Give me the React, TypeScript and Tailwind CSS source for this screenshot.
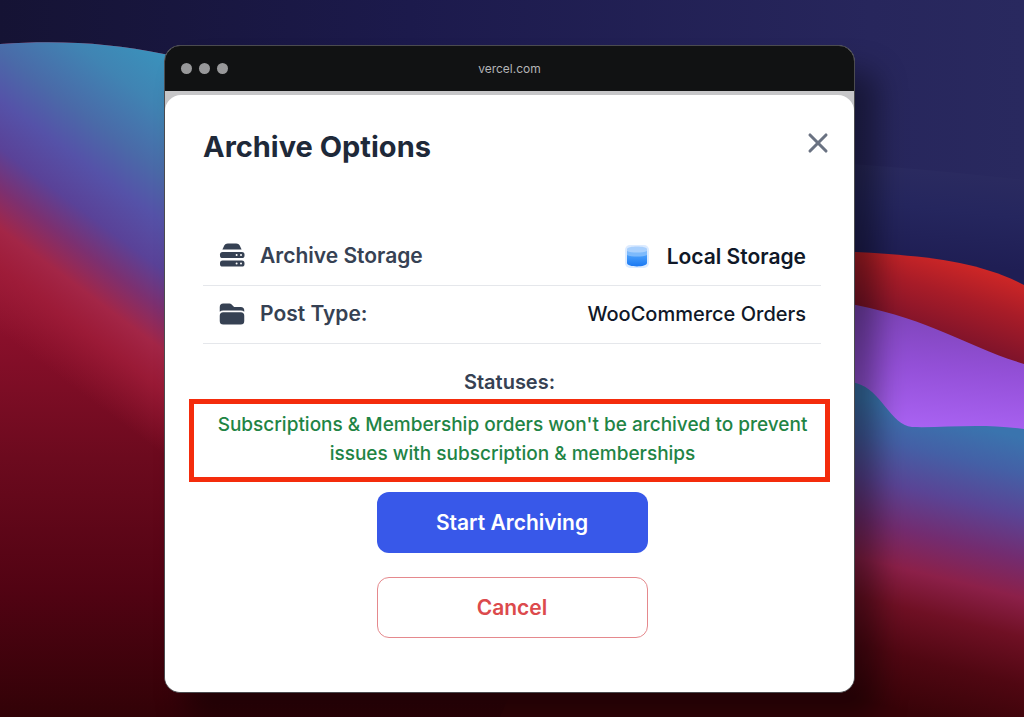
import React from 'react';
import { X } from 'lucide-react';
import { HiFolder } from 'react-icons/hi2';

const Wallpaper: React.FC = () => (
  <svg
    className="absolute inset-0 -z-10 h-full w-full"
    viewBox="0 0 1024 717"
    preserveAspectRatio="none"
    aria-hidden="true"
  >
    <defs>
      <linearGradient id="sky" x1="0" y1="0" x2="1" y2="0">
        <stop offset="0" stopColor="#151334" />
        <stop offset="0.4" stopColor="#1c1a4c" />
        <stop offset="0.85" stopColor="#27265c" />
        <stop offset="1" stopColor="#29295f" />
      </linearGradient>
      <linearGradient id="ridge" gradientUnits="userSpaceOnUse" x1="930" y1="165" x2="920" y2="260">
        <stop offset="0" stopColor="#2b2b60" />
        <stop offset="0.45" stopColor="#25265e" />
        <stop offset="1" stopColor="#1f1e54" />
      </linearGradient>
      <linearGradient id="base" gradientUnits="userSpaceOnUse" x1="0" y1="200" x2="0" y2="717">
        <stop offset="0" stopColor="#a82040" />
        <stop offset="0.27" stopColor="#880f2a" />
        <stop offset="0.5" stopColor="#6c0a1e" />
        <stop offset="0.75" stopColor="#520313" />
        <stop offset="1" stopColor="#320207" />
      </linearGradient>
      <linearGradient id="glow" gradientUnits="userSpaceOnUse" x1="164" y1="54" x2="-28" y2="312">
        <stop offset="0" stopColor="#3a92bc" />
        <stop offset="0.14" stopColor="#4084b3" />
        <stop offset="0.3" stopColor="#4a6aa8" />
        <stop offset="0.42" stopColor="#5552a8" />
        <stop offset="0.54" stopColor="#5a4298" />
        <stop offset="0.64" stopColor="#7c3070" />
        <stop offset="0.74" stopColor="#a32647" />
        <stop offset="0.84" stopColor="#a01d3a" stopOpacity="0.8" />
        <stop offset="1" stopColor="#9a1a34" stopOpacity="0" />
      </linearGradient>
      <linearGradient id="red" gradientUnits="userSpaceOnUse" x1="960" y1="256" x2="930" y2="350">
        <stop offset="0" stopColor="#d32826" />
        <stop offset="0.4" stopColor="#a81c28" />
        <stop offset="1" stopColor="#70102b" />
      </linearGradient>
      <linearGradient id="violet" gradientUnits="userSpaceOnUse" x1="940" y1="310" x2="930" y2="428">
        <stop offset="0" stopColor="#7d44b8" />
        <stop offset="0.5" stopColor="#9450d8" />
        <stop offset="1" stopColor="#a962f2" />
      </linearGradient>
      <linearGradient id="wave" gradientUnits="userSpaceOnUse" x1="930" y1="415" x2="860" y2="700">
        <stop offset="0" stopColor="#3a74ae" />
        <stop offset="0.12" stopColor="#4460a6" />
        <stop offset="0.26" stopColor="#5a4495" />
        <stop offset="0.4" stopColor="#732c70" />
        <stop offset="0.53" stopColor="#8c2049" />
        <stop offset="0.66" stopColor="#6f1024" />
        <stop offset="0.82" stopColor="#500712" />
        <stop offset="1" stopColor="#380308" />
      </linearGradient>
    </defs>
    <rect width="1024" height="717" fill="url(#sky)" />
    <path d="M700 158 C800 158 920 168 1024 180 V717 H700Z" fill="url(#ridge)" />
    <path d="M700 247 L856 252 C930 256 980 262 1024 285 V717 H700Z" fill="url(#red)" />
    <path d="M700 280 L856 305 C935 321 965 346 1024 364 V717 H700Z" fill="url(#violet)" />
    <path
      d="M0 44 C60 40 110 43 164 54 C400 100 500 717 700 717 H0Z"
      fill="url(#base)"
    />
    <path d="M0 44 C60 40 110 43 164 54 C400 100 400 400 400 717 H0Z" fill="url(#glow)" />
    <path
      d="M500 717 C600 500 780 370 856 383 C882 390 890 425 912 427 C945 428 980 423 1024 429 V717Z"
      fill="url(#wave)"
    />
  </svg>
);

const ServerIcon: React.FC = () => (
  <svg width="28" height="28" viewBox="0 0 28 28" fill="currentColor" aria-hidden="true">
    <path d="M9.8 1.5 H18.2 C20 1.5 21 2.2 21.7 3.6 L23.6 7.6 H4.4 L6.3 3.6 C7 2.2 8 1.5 9.8 1.5Z" />
    <rect x="2" y="10" width="24.5" height="6" rx="2.6" />
    <rect x="2" y="18.6" width="24.5" height="6" rx="2.6" />
    <g fill="white">
      <circle cx="18.6" cy="13" r="1" />
      <circle cx="23" cy="13" r="1" />
      <circle cx="18.6" cy="21.6" r="1" />
      <circle cx="23" cy="21.6" r="1" />
    </g>
  </svg>
);

const LocalDiskIcon: React.FC = () => (
  <svg width="24" height="24" viewBox="0 0 24 24" aria-hidden="true">
    <defs>
      <linearGradient id="disk" x1="0" y1="0" x2="0" y2="1">
        <stop offset="0" stopColor="#4a9ffb" />
        <stop offset="1" stopColor="#1a78f2" />
      </linearGradient>
    </defs>
    <rect width="24" height="23" rx="5" fill="#dcebff" />
    <path d="M2 4 C2 0.5 22 0.5 22 4 V12 H2Z" fill="#a9d0fd" />
    <path d="M2 6 C6 8 18 8 22 6 V12 H2Z" fill="#7dbafc" />
    <path d="M2 10 C6 12 18 12 22 10 V18 C22 22.5 2 22.5 2 18Z" fill="url(#disk)" />
  </svg>
);

interface OptionRowProps {
  icon: React.ReactNode;
  label: string;
  children: React.ReactNode;
}

const OptionRow: React.FC<OptionRowProps> = ({ icon, label, children }) => (
  <div className="flex h-[58px] items-center justify-between border-b border-gray-200 px-[15px]">
    <dt className="flex items-center gap-3.5 pb-0.5 font-semibold text-gray-700">
      {icon}
      {label}
    </dt>
    <dd className="flex items-center gap-[18px] text-gray-900">{children}</dd>
  </div>
);

export default function App() {
  return (
    <main className="relative isolate min-h-screen overflow-hidden pt-[45px] pr-[5px] pb-6 font-['Inter',sans-serif]">
      <Wallpaper />

      {/* Browser window */}
      <div className="mx-auto w-full max-w-[691px] overflow-hidden rounded-2xl border border-[#4b4b4f] bg-[#c6c6c8] shadow-[22px_26px_30px_rgba(0,0,0,0.4)]">
        <div className="grid h-[45px] grid-cols-3 items-center bg-[#111213] px-4">
          <div className="flex gap-[7px]">
            <span className="size-[11px] rounded-full bg-[#98989a]" />
            <span className="size-[11px] rounded-full bg-[#98989a]" />
            <span className="size-[11px] rounded-full bg-[#98989a]" />
          </div>
          <p className="text-center text-xs text-[#b4b4b6]">vercel.com</p>
        </div>

        {/* Archive dialog */}
        <section
          role="dialog"
          aria-labelledby="dialog-title"
          className="mt-1 rounded-t-2xl bg-white pt-8 pb-[54px] text-[21px] leading-[29px]"
        >
          <header className="flex items-start justify-between pr-5 pl-[38px]">
            <h1 id="dialog-title" className="pt-0.5 text-[29px] leading-9 font-bold text-gray-800">
              Archive Options
            </h1>
            <button type="button" aria-label="Close" className="text-gray-500">
              <X size={32} strokeWidth={2.3} />
            </button>
          </header>

          <dl className="mt-[63px] pr-[33px] pl-[38px]">
            <OptionRow icon={<ServerIcon />} label="Archive Storage">
              <LocalDiskIcon />
              <span className="font-semibold">Local Storage</span>
            </OptionRow>
            <OptionRow icon={<HiFolder size={28} />} label="Post Type:">
              <span className="text-[20px] font-medium">WooCommerce Orders</span>
            </OptionRow>
          </dl>

          <h2 className="mt-6 text-center text-[20px] font-semibold text-gray-700">Statuses:</h2>
          <div className="mx-6 mt-0.5 border-5 border-[#f42c0c] pt-1.5 pr-2 pb-[9px] pl-3.5">
            <p className="text-center text-[19px] font-medium text-[#1f8445]">
              Subscriptions &amp; Membership orders won't be archived to prevent issues with
              subscription &amp; memberships
            </p>
          </div>

          <div className="mt-2.5 flex flex-col items-center gap-6 pr-[33px] pl-[38px]">
            <button
              type="button"
              className="h-[61px] w-full max-w-[271px] rounded-xl bg-[#3858e9] font-semibold text-white"
            >
              Start Archiving
            </button>
            <button
              type="button"
              className="h-[61px] w-full max-w-[271px] rounded-xl border border-[#e5898d] bg-white font-semibold text-[#dc4a4c]"
            >
              Cancel
            </button>
          </div>
        </section>
      </div>
    </main>
  );
}
